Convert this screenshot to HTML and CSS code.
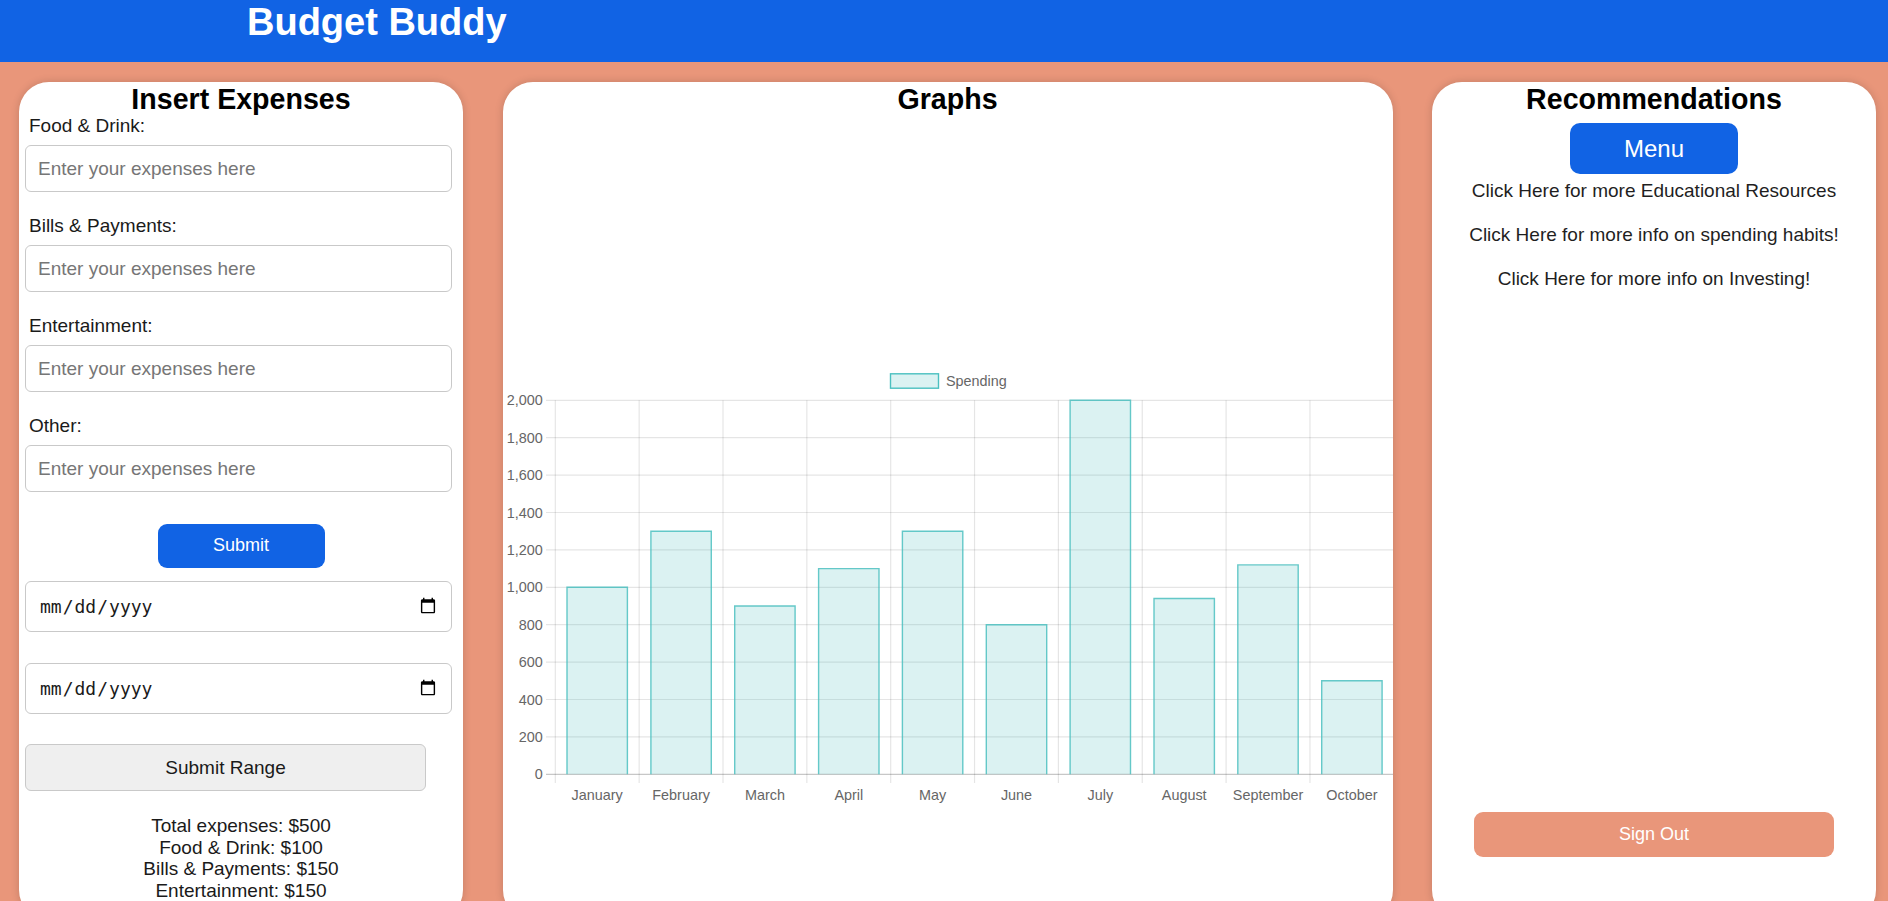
FILE: index.html
```html
<!DOCTYPE html>
<html lang="en">
<head>
<meta charset="utf-8">
<title>Budget Buddy</title>
<link rel="stylesheet" href="styles.css">
</head>
<body>
<header class="header">
  <h1 class="brand">Budget Buddy</h1>
</header>
<main class="main">
  <section class="card card-left">
    <h2 class="card-title">Insert Expenses</h2>
    <div class="field">
      <label class="field-label" for="food">Food &amp; Drink:</label>
      <input class="text-input" id="food" type="text" placeholder="Enter your expenses here">
    </div>
    <div class="field">
      <label class="field-label" for="bills">Bills &amp; Payments:</label>
      <input class="text-input" id="bills" type="text" placeholder="Enter your expenses here">
    </div>
    <div class="field">
      <label class="field-label" for="ent">Entertainment:</label>
      <input class="text-input" id="ent" type="text" placeholder="Enter your expenses here">
    </div>
    <div class="field field-last">
      <label class="field-label" for="other">Other:</label>
      <input class="text-input" id="other" type="text" placeholder="Enter your expenses here">
    </div>
    <button class="btn-submit" type="button">Submit</button>
    <input class="date-input date-first" type="date">
    <input class="date-input date-second" type="date">
    <button class="btn-range" type="button">Submit Range</button>
    <div class="totals">
      <div>Total expenses: $500</div>
      <div>Food &amp; Drink: $100</div>
      <div>Bills &amp; Payments: $150</div>
      <div>Entertainment: $150</div>
      <div>Other: $100</div>
    </div>
  </section>

  <section class="card card-mid">
    <h2 class="card-title">Graphs</h2>
    <svg class="chart" width="890" height="450" viewBox="0 0 890 450" xmlns="http://www.w3.org/2000/svg">
      <!-- legend -->
      <rect x="387.5" y="13.8" width="48" height="14.4" fill="rgba(75,192,192,0.2)" stroke="rgb(75,192,192)" stroke-width="1.4"/>
      <text x="443" y="25.6" class="lbl">Spending</text>

      <!-- horizontal grid -->
      <g stroke="rgba(0,0,0,0.1)" stroke-width="1.2">
        <line x1="43" y1="40.3" x2="890" y2="40.3"/>
        <line x1="43" y1="77.7" x2="890" y2="77.7"/>
        <line x1="43" y1="115.1" x2="890" y2="115.1"/>
        <line x1="43" y1="152.5" x2="890" y2="152.5"/>
        <line x1="43" y1="189.9" x2="890" y2="189.9"/>
        <line x1="43" y1="227.3" x2="890" y2="227.3"/>
        <line x1="43" y1="264.7" x2="890" y2="264.7"/>
        <line x1="43" y1="302.1" x2="890" y2="302.1"/>
        <line x1="43" y1="339.5" x2="890" y2="339.5"/>
        <line x1="43" y1="376.9" x2="890" y2="376.9"/>
      </g>
      <!-- vertical grid -->
      <g stroke="rgba(0,0,0,0.1)" stroke-width="1.2">
        <line x1="52.3" y1="40.3" x2="52.3" y2="423"/>
        <line x1="136.15" y1="40.3" x2="136.15" y2="423"/>
        <line x1="220" y1="40.3" x2="220" y2="423"/>
        <line x1="303.85" y1="40.3" x2="303.85" y2="423"/>
        <line x1="387.7" y1="40.3" x2="387.7" y2="423"/>
        <line x1="471.55" y1="40.3" x2="471.55" y2="423"/>
        <line x1="555.4" y1="40.3" x2="555.4" y2="423"/>
        <line x1="639.25" y1="40.3" x2="639.25" y2="423"/>
        <line x1="723.1" y1="40.3" x2="723.1" y2="423"/>
        <line x1="806.95" y1="40.3" x2="806.95" y2="423"/>
      </g>
      <line x1="43" y1="414.3" x2="890" y2="414.3" stroke="rgba(0,0,0,0.22)" stroke-width="1.2"/>

      <!-- bars -->
      <g fill="rgba(75,192,192,0.2)" stroke="rgb(75,192,192)" stroke-width="1.4" stroke-opacity="0.85">
        <path d="M64 414.3 V227.3 H124.4 V414.3 Z" stroke="none"/>
        <path d="M64 414.3 V227.3 H124.4 V414.3" fill="none"/>
        <path d="M147.9 414.3 V171.2 H208.3 V414.3 Z" stroke="none"/>
        <path d="M147.9 414.3 V171.2 H208.3 V414.3" fill="none"/>
        <path d="M231.7 414.3 V246 H292.1 V414.3 Z" stroke="none"/>
        <path d="M231.7 414.3 V246 H292.1 V414.3" fill="none"/>
        <path d="M315.6 414.3 V208.6 H376 V414.3 Z" stroke="none"/>
        <path d="M315.6 414.3 V208.6 H376 V414.3" fill="none"/>
        <path d="M399.4 414.3 V171.2 H459.8 V414.3 Z" stroke="none"/>
        <path d="M399.4 414.3 V171.2 H459.8 V414.3" fill="none"/>
        <path d="M483.3 414.3 V264.7 H543.7 V414.3 Z" stroke="none"/>
        <path d="M483.3 414.3 V264.7 H543.7 V414.3" fill="none"/>
        <path d="M567.1 414.3 V40.3 H627.5 V414.3 Z" stroke="none"/>
        <path d="M567.1 414.3 V40.3 H627.5 V414.3" fill="none"/>
        <path d="M651 414.3 V238.5 H711.4 V414.3 Z" stroke="none"/>
        <path d="M651 414.3 V238.5 H711.4 V414.3" fill="none"/>
        <path d="M734.8 414.3 V204.9 H795.2 V414.3 Z" stroke="none"/>
        <path d="M734.8 414.3 V204.9 H795.2 V414.3" fill="none"/>
        <path d="M818.7 414.3 V320.8 H879.1 V414.3 Z" stroke="none"/>
        <path d="M818.7 414.3 V320.8 H879.1 V414.3" fill="none"/>
      </g>

      <!-- y labels -->
      <g class="lbl" text-anchor="end">
        <text x="39.7" y="45.4">2,000</text>
        <text x="39.7" y="82.8">1,800</text>
        <text x="39.7" y="120.2">1,600</text>
        <text x="39.7" y="157.6">1,400</text>
        <text x="39.7" y="195">1,200</text>
        <text x="39.7" y="232.4">1,000</text>
        <text x="39.7" y="269.8">800</text>
        <text x="39.7" y="307.2">600</text>
        <text x="39.7" y="344.6">400</text>
        <text x="39.7" y="382">200</text>
        <text x="39.7" y="419.4">0</text>
      </g>
      <!-- x labels -->
      <g class="lbl" text-anchor="middle">
        <text x="94.2" y="440.2">January</text>
        <text x="178.1" y="440.2">February</text>
        <text x="261.9" y="440.2">March</text>
        <text x="345.8" y="440.2">April</text>
        <text x="429.6" y="440.2">May</text>
        <text x="513.5" y="440.2">June</text>
        <text x="597.3" y="440.2">July</text>
        <text x="681.2" y="440.2">August</text>
        <text x="765" y="440.2">September</text>
        <text x="848.9" y="440.2">October</text>
      </g>
    </svg>
  </section>

  <section class="card card-right">
    <h2 class="card-title">Recommendations</h2>
    <button class="btn-menu" type="button">Menu</button>
    <nav class="links">
      <a class="link" href="#">Click Here for more Educational Resources</a>
      <a class="link" href="#">Click Here for more info on spending habits!</a>
      <a class="link" href="#">Click Here for more info on Investing!</a>
    </nav>
    <button class="btn-signout" type="button">Sign Out</button>
  </section>
</main>
</body>
</html>
```

FILE: styles.css
```css
html {
  scrollbar-width: none;
}

body {
  margin: 0;
  font-family: "Liberation Sans", Arial, sans-serif;
  background: #e9967a;
  color: #1a1a1a;
}

.header {
  background: #1163e4;
  height: 62px;
  padding-left: 247px;
  box-sizing: border-box;
}

.brand {
  margin: 0;
  font-size: 38px;
  line-height: 44px;
  font-weight: bold;
  color: #ffffff;
}

.main {
  display: flex;
  align-items: flex-start;
  column-gap: 39.5px;
  padding: 20px 12px 0 19px;
}

.card {
  background: #ffffff;
  border-radius: 30px;
  height: 838px;
  box-sizing: border-box;
  padding-top: 1px;
  box-shadow: 0 0 8px rgba(0, 0, 0, 0.16);
  flex: none;
}

.card-title {
  margin: 0;
  font-size: 28.6px;
  line-height: 32px;
  font-weight: bold;
  text-align: center;
  color: #000;
}

/* left card */
.card-left {
  width: 444px;
  padding-left: 6px;
  padding-right: 6px;
}

.field {
  margin-bottom: 23px;
}

.field-last {
  margin-bottom: 0;
}

.field-label {
  display: block;
  font-size: 19px;
  line-height: 22px;
  padding-left: 4px;
  margin-bottom: 8px;
  color: #1a1a1a;
}

.text-input {
  display: block;
  width: 427px;
  height: 47px;
  box-sizing: border-box;
  border: 1px solid #c9c9c9;
  border-radius: 6px;
  padding: 0 12px;
  font-family: "Liberation Sans", Arial, sans-serif;
  font-size: 19px;
  color: #222;
  background: #fff;
}

.text-input::placeholder {
  color: #767676;
}

.btn-submit {
  display: block;
  margin: 31.5px auto 0;
  width: 167px;
  height: 44px;
  border: none;
  border-radius: 9px;
  background: #1163e4;
  color: #ffffff;
  font-family: "Liberation Sans", Arial, sans-serif;
  font-size: 18px;
}

.date-input {
  display: block;
  width: 427px;
  height: 51px;
  box-sizing: border-box;
  border: 1px solid #c9c9c9;
  border-radius: 6px;
  padding: 0 12px 0 13px;
  font-family: "DejaVu Sans Mono", monospace;
  font-size: 18px;
  color: #1a1a1a;
  background: #fff;
}

.date-first {
  margin-top: 13px;
}

.date-second {
  margin-top: 31px;
}

.btn-range {
  display: block;
  margin-top: 30.5px;
  width: 401px;
  height: 47px;
  box-sizing: border-box;
  border: 1px solid #c9c9c9;
  border-radius: 6px;
  background: #efefef;
  color: #1a1a1a;
  font-family: "Liberation Sans", Arial, sans-serif;
  font-size: 19px;
}

.totals {
  margin-top: 24px;
  text-align: center;
  font-size: 19px;
  line-height: 21.7px;
  color: #1a1a1a;
}

/* middle card */
.card-mid {
  width: 890px;
  overflow: hidden;
}

.chart {
  display: block;
  margin-top: 245px;
}

.lbl {
  font-family: "Liberation Sans", Arial, sans-serif;
  font-size: 14.4px;
  fill: #666666;
}

/* right card */
.card-right {
  width: 444px;
  display: flex;
  flex-direction: column;
  align-items: center;
}

.btn-menu {
  margin-top: 8px;
  width: 168px;
  height: 51px;
  border: none;
  border-radius: 10px;
  background: #1163e4;
  color: #ffffff;
  font-family: "Liberation Sans", Arial, sans-serif;
  font-size: 24px;
}

.links {
  margin-top: 6px;
  display: flex;
  flex-direction: column;
  align-items: center;
  row-gap: 22px;
}

.link {
  font-size: 19px;
  line-height: 22px;
  color: #1f1f1f;
  text-decoration: none;
}

.btn-signout {
  margin-top: auto;
  margin-bottom: 63px;
  width: 360px;
  height: 45px;
  border: none;
  border-radius: 9px;
  background: #e9967a;
  color: #ffffff;
  font-family: "Liberation Sans", Arial, sans-serif;
  font-size: 18px;
}
```
